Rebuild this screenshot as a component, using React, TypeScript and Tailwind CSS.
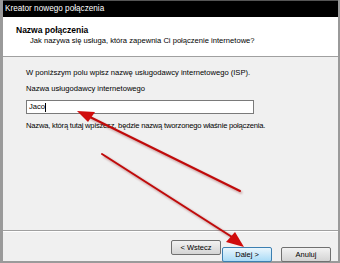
import React from "react";

const font = { fontFamily: '"Liberation Sans", Arial, sans-serif' };

function WizardButton({ label, active }: { label: string; active?: boolean }) {
  return (
    <button
      className={
        active
          ? "w-[50px] h-[15px] border border-[#3c7fb1] rounded-[2px] bg-gradient-to-b from-[#eaf6fd] to-[#a9dbf6] text-[7.5px] text-black leading-none"
          : "w-[50px] h-[15px] border border-[#707070] rounded-[2px] bg-gradient-to-b from-[#f2f2f2] to-[#d4d4d4] text-[7.5px] text-black leading-none"
      }
    >
      {label}
    </button>
  );
}

// red marker arrows drawn on top of the screenshot
function Arrows() {
  return (
    <svg className="absolute left-0 top-0 pointer-events-none" width="340" height="263" viewBox="0 0 340 263">
      <defs>
        <filter id="sh" x="-10%" y="-10%" width="120%" height="120%">
          <feGaussianBlur stdDeviation="1.2" />
        </filter>
      </defs>
      <g opacity="0.35" filter="url(#sh)" stroke="#7a0000" strokeWidth="2.5">
        <line x1="242" y1="193" x2="90" y2="118" />
        <line x1="104" y1="156" x2="236" y2="240" />
      </g>
      <g stroke="#c00a0a" strokeWidth="2" strokeLinecap="round">
        <line x1="240" y1="191" x2="90" y2="117" />
        <line x1="102" y1="154" x2="232" y2="237" />
      </g>
      <polygon points="77,111 95,112 88,122" fill="#d00c0c" />
      <polygon points="244,247 226,242 235,232" fill="#d00c0c" />
    </svg>
  );
}

export default function App() {
  return (
    <div className="relative w-[340px] h-[263px] overflow-hidden bg-[#f0f0f0]" style={font}>
      <div className="flex flex-col w-full h-full border-l-[3px] border-r-2 border-b-2 border-[#9a9a9a]">
        <div className="h-[17px] bg-[#000] border-t border-[#555] flex items-center pl-[2px]">
          <span className="text-white text-[8.2px] leading-none">Kreator nowego połączenia</span>
        </div>

        <div className="h-[40px] bg-white border-b border-[#a0a0a0] pl-[13px] pt-[8px]">
          <p className="text-[8.5px] font-bold leading-[11px] text-black">Nazwa połączenia</p>
          <p className="text-[7.6px] leading-[10px] text-black pl-[14px]">
            Jak nazywa się usługa, która zapewnia Ci połączenie internetowe?
          </p>
        </div>

        <div className="flex-1 pl-[23px] pt-[11px] text-black text-[7.6px]">
          <p className="leading-[10px]">W poniższym polu wpisz nazwę usługodawcy internetowego (ISP).</p>
          <p className="leading-[10px] mt-[6px]">Nazwa usługodawcy internetowego</p>
          <div className="mt-[6px] w-[228px] h-[14px] bg-white border border-[#7a7a7a] flex items-center pl-[2px]">
            <span className="leading-none">Jaco</span>
            <span className="w-px h-[9px] bg-black" />
          </div>
          <p className="leading-[10px] mt-[7px] tracking-[-0.2px]">
            Nazwa, którą tutaj wpiszesz, będzie nazwą tworzonego właśnie połączenia.
          </p>
        </div>

        <div className="border-t border-[#a0a0a0] shadow-[inset_0_1px_0_#fff] h-[31px] flex items-start pt-[9px] pl-[168px]">
          <WizardButton label="< Wstecz" />
          <div className="ml-px">
            <WizardButton label="Dalej >" active />
          </div>
          <div className="ml-[9px]">
            <WizardButton label="Anuluj" />
          </div>
        </div>
      </div>
      <Arrows />
    </div>
  );
}
